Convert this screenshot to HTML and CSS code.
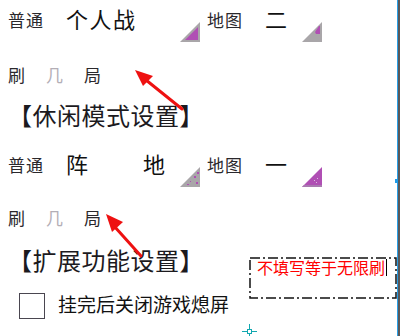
FILE: index.html
```html
<!DOCTYPE html>
<html lang="zh">
<head>
<meta charset="utf-8">
<link rel="stylesheet" href="styles.css">
</head>
<body>
<div class="frame">
  <div class="content">
    <div class="sel-row r1">
      <span class="lbl">普通</span>
      <span class="val">个人战</span>
      <svg class="tri" viewBox="0 0 20 20"><polygon points="0,20 20,20 20,0" fill="#a9a6a9"/><polygon points="5,18 18,18 18,5" fill="#b04fb4"/></svg>
      <span class="lbl lbl2">地图</span>
      <span class="val val2">二</span>
      <svg class="tri" viewBox="0 0 20 20"><polygon points="0,20 20,20 20,0" fill="#a9a6a9"/><polygon points="13,10 17,4 18,4 18,12 14,12" fill="#b04fb4"/></svg>
    </div>
    <div class="shua r2">
      <span>刷</span><span class="ji">几</span><span>局</span>
    </div>
    <div class="heading r3">【休闲模式设置】</div>
    <div class="sel-row r4">
      <span class="lbl">普通</span>
      <span class="val split"><span>阵</span><span>地</span></span>
      <svg class="tri" viewBox="0 0 20 20"><polygon points="0,20 20,20 20,0" fill="#a9a6a9"/><rect x="10" y="14" width="1" height="1" fill="#b04fb4"/><rect x="14" y="9" width="2" height="2" fill="#b04fb4"/><rect x="17" y="5" width="2" height="2" fill="#b04fb4"/><rect x="16" y="15" width="2" height="2" fill="#b04fb4"/><rect x="7" y="17" width="2" height="1" fill="#b04fb4"/></svg>
      <span class="lbl lbl2">地图</span>
      <span class="val val2">一</span>
      <svg class="tri" viewBox="0 0 20 20"><polygon points="0,20 20,20 20,0" fill="#b04fb4"/><polygon points="0,20 20,20 20,18 2,18" fill="#a97ab0"/><rect x="12" y="13" width="1" height="1" fill="#d9c0dc"/><rect x="15" y="11" width="1" height="1" fill="#d9c0dc"/><rect x="14" y="15" width="1" height="1" fill="#d9c0dc"/></svg>
    </div>
    <div class="shua r5">
      <span>刷</span><span class="ji">几</span><span>局</span>
    </div>
    <div class="group">
      <div class="left">
        <div class="heading">【扩展功能设置】</div>
        <label class="check-row">
          <span class="box"></span>
          <span class="check-text">挂完后关闭游戏熄屏</span>
        </label>
      </div>
      <div class="input">
        <svg class="dash" viewBox="0 0 148 42" preserveAspectRatio="none"><rect x="1" y="1" width="146" height="40" fill="none" stroke="#111" stroke-width="1.5" stroke-dasharray="10 3 2 3"/></svg>
        <span class="hint">不填写等于无限刷</span><span class="caret"></span>
      </div>
    </div>
  </div>
  <svg class="annot" width="400" height="336" viewBox="0 0 400 336">
    <line x1="182" y1="109" x2="146" y2="80" stroke="#ee1111" stroke-width="3" stroke-linecap="round"/>
    <polygon points="135,70 153,76 143,86" fill="#ee1111"/>
    <line x1="141" y1="256" x2="114" y2="226" stroke="#ee1111" stroke-width="3" stroke-linecap="round"/>
    <polygon points="106,214 123,222 112,232" fill="#ee1111"/>
  </svg>
  <div class="cross"><span class="cross-sq"></span></div>
  <div class="handle"></div>
</div>
</body>
</html>
```

FILE: styles.css
```css
html, body {
  margin: 0;
  padding: 0;
  background: #ffffff;
}
.frame {
  position: relative;
  width: 400px;
  height: 336px;
  box-sizing: border-box;
  border-right: 2px solid #58585a;
  display: flex;
  overflow: hidden;
  font-family: "Noto Sans CJK SC", "Noto Sans", sans-serif;
  color: #1c1a1e;
}
.content {
  flex: 1;
  border-right: 1px solid #2a9fe6;
  padding-left: 8px;
  display: flex;
  flex-direction: column;
}
.sel-row {
  display: flex;
  align-items: flex-start;
  height: 35px;
}
.r1 { padding-top: 7px; }
.r4 { margin-top: 25px; }
.lbl {
  width: 58px;
  font-size: 17px;
  line-height: 17px;
  letter-spacing: 1px;
  margin-top: 4px;
  color: #2a282c;
}
.lbl2 { margin-left: 7px; }
.val {
  width: 114px;
  font-size: 22px;
  line-height: 22px;
  letter-spacing: 1.5px;
  color: #111;
}
.val2 { width: 37px; }
.split {
  display: flex;
  justify-content: space-between;
  width: 99px;
  margin-right: 15px;
  letter-spacing: 0;
}
.tri {
  width: 20px;
  height: 20px;
  margin-top: 15px;
  flex: none;
}
.shua {
  display: flex;
  gap: 21px;
  font-size: 17px;
  line-height: 17px;
  color: #2a282c;
}
.shua span { width: 17px; }
.shua .ji { color: #b3aeb6; }
.r2 { margin-top: 24px; }
.r5 { margin-top: 22px; }
.heading {
  font-size: 24px;
  line-height: 24px;
  letter-spacing: 0.5px;
  color: #1c1a1e;
  white-space: nowrap;
}
.r3 { margin-top: 20px; }
.group {
  display: flex;
  margin-top: 22px;
}
.left {
  width: 241px;
  display: flex;
  flex-direction: column;
}
.check-row {
  display: flex;
  align-items: center;
  margin-top: 21px;
  margin-left: 11px;
}
.box {
  width: 26px;
  height: 26px;
  box-sizing: border-box;
  border: 1px solid #4a4650;
  flex: none;
}
.check-text {
  margin-left: 13px;
  font-size: 19px;
  line-height: 20px;
  color: #111;
  white-space: nowrap;
  margin-top: -4px;
}
.input {
  position: relative;
  width: 148px;
  height: 42px;
  margin-top: 9px;
  box-sizing: border-box;
  padding: 2px 0 0 8px;
  display: flex;
  align-items: flex-start;
}
.dash {
  position: absolute;
  left: 0;
  top: 0;
  width: 148px;
  height: 42px;
}
.hint {
  font-size: 16px;
  line-height: 17px;
  color: #ff0000;
  white-space: nowrap;
}
.caret {
  width: 1px;
  height: 17px;
  background: #000;
  margin-left: 1px;
}
.annot {
  position: absolute;
  left: 0;
  top: 0;
  pointer-events: none;
}
.cross {
  position: absolute;
  left: 242px;
  top: 324px;
  width: 15px;
  height: 15px;
}
.cross::before {
  content: "";
  position: absolute;
  left: 0;
  top: 7px;
  width: 15px;
  height: 1px;
  background: #12a8b0;
}
.cross::after {
  content: "";
  position: absolute;
  left: 7px;
  top: 0;
  width: 1px;
  height: 15px;
  background: #12a8b0;
}
.cross-sq {
  position: absolute;
  left: 5px;
  top: 5px;
  width: 5px;
  height: 5px;
  box-sizing: border-box;
  border: 1px solid #12a8b0;
  background: #fff;
  z-index: 1;
}
.handle {
  position: absolute;
  left: 395px;
  top: 179px;
  width: 3px;
  height: 4px;
  background: #1e9be8;
}
```
